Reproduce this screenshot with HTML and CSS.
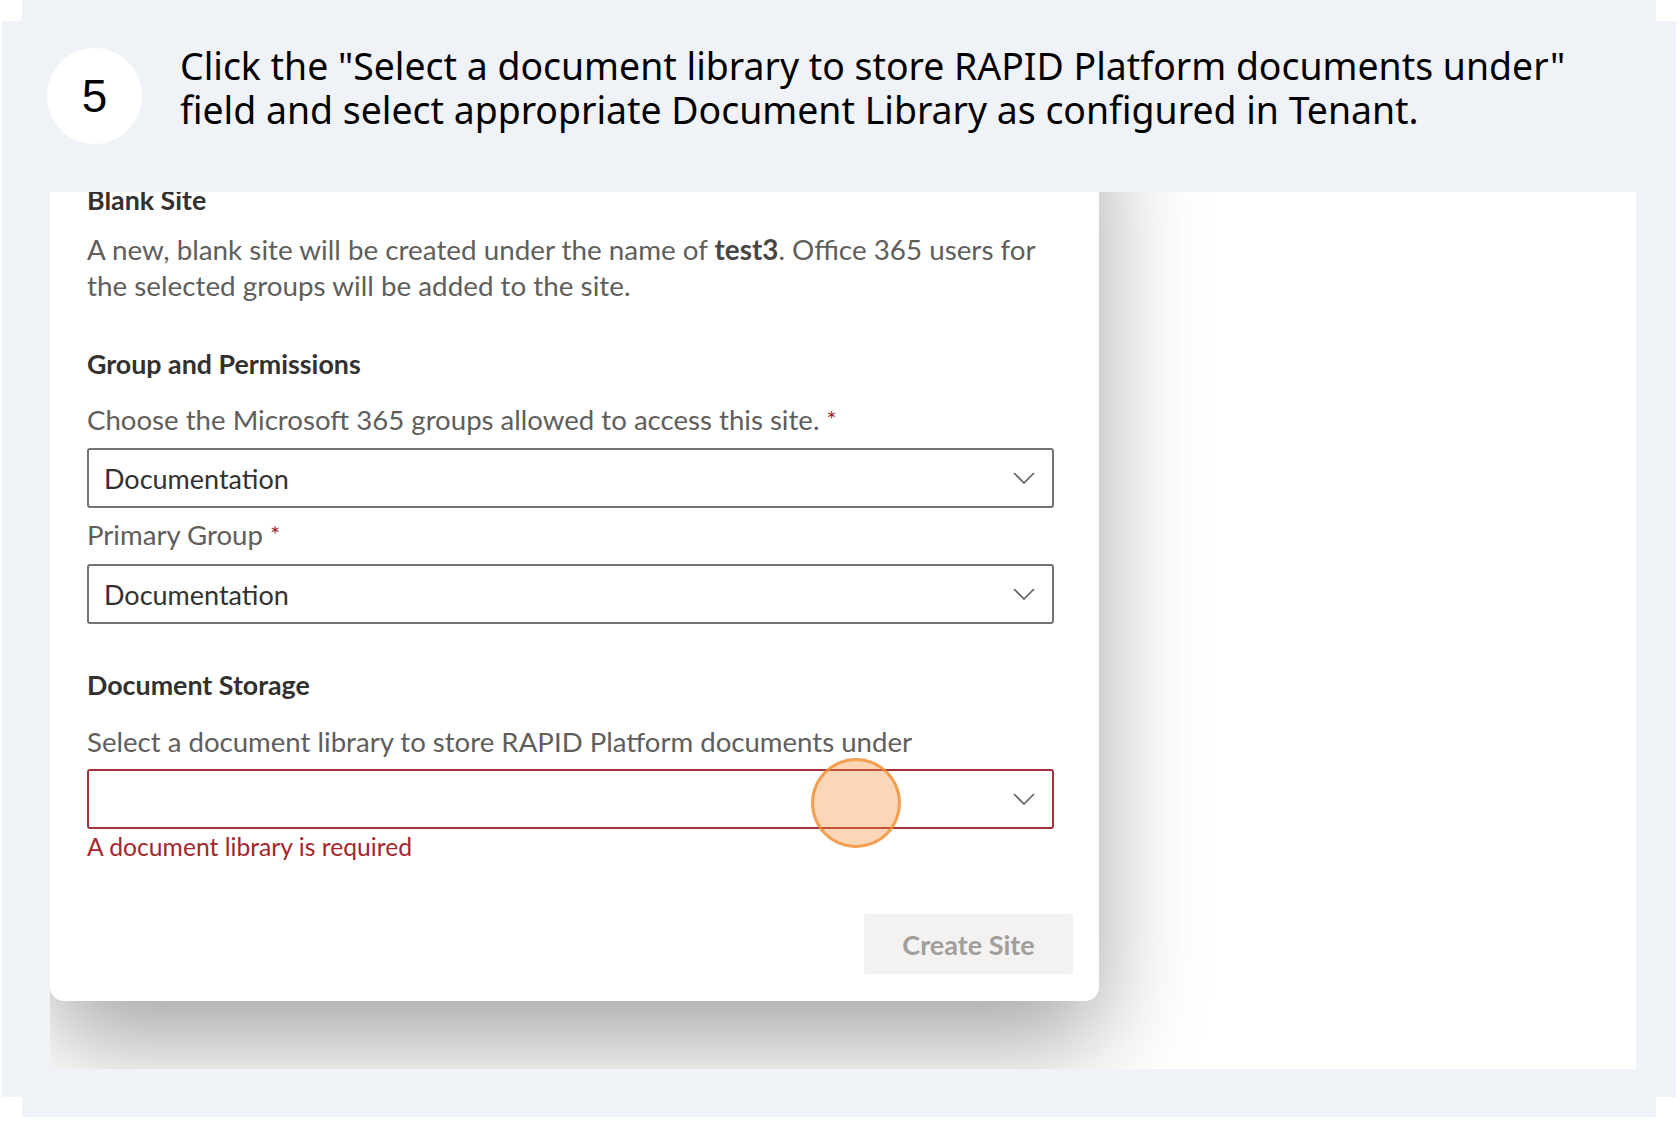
FILE: index.html
```html
<!DOCTYPE html>
<html lang="en">
<head>
<meta charset="utf-8">
<title>Step 5</title>
<link rel="stylesheet" href="styles.css">
</head>
<body>
<div class="outer">
<div class="frame">
  <header class="step">
    <div class="step-num">5</div>
    <p class="step-text">Click the "Select a document library to store RAPID Platform documents under"<br>field and select appropriate Document Library as configured in Tenant.</p>
  </header>
  <div class="shot">
    <div class="card">
      <h3 class="sec-title t-blank">Blank Site</h3>
      <p class="desc">A new, blank site will be created under the name of <b>test3</b>. Office 365 users for<br>the selected groups will be added to the site.</p>

      <h3 class="sec-title t-group">Group and Permissions</h3>
      <label class="label l-1">Choose the Microsoft 365 groups allowed to access this site.<span class="req">*</span></label>
      <div class="select s-1">
        <span class="select-value">Documentation</span>
        <svg class="chev" width="22" height="12" viewBox="0 0 22 12"><polyline points="1,1 11,11 21,1" fill="none" stroke="#5f5e5c" stroke-width="1.6"/></svg>
      </div>
      <label class="label l-2">Primary Group<span class="req">*</span></label>
      <div class="select s-2">
        <span class="select-value">Documentation</span>
        <svg class="chev" width="22" height="12" viewBox="0 0 22 12"><polyline points="1,1 11,11 21,1" fill="none" stroke="#5f5e5c" stroke-width="1.6"/></svg>
      </div>

      <h3 class="sec-title t-doc">Document Storage</h3>
      <label class="label l-3">Select a document library to store RAPID Platform documents under</label>
      <div class="select select-error s-3">
        <span class="select-value"></span>
        <svg class="chev" width="22" height="12" viewBox="0 0 22 12"><polyline points="1,1 11,11 21,1" fill="none" stroke="#5f5e5c" stroke-width="1.6"/></svg>
        <span class="click-marker"></span>
      </div>
      <p class="error">A document library is required</p>

      <div class="actions">
        <button class="btn-create" type="button">Create Site</button>
      </div>
    </div>
  </div>
</div>
</div>
</body>
</html>
```
FILE: styles.css
```css
* { box-sizing: border-box; }

body {
  margin: 0;
  background: #ffffff;
}

.outer {
  margin-left: 22px;
  width: 1634px;
  height: 1117px;
  padding-top: 21px;
  background: #eff2f7;
}

.frame {
  margin: 0 -20px;
  height: 1076px;
  background: #eff2f7;
  padding: 27px 40px 0 45px;
}

.step {
  display: flex;
  align-items: flex-start;
  gap: 38px;
  height: 96px;
}

.step-num {
  flex: none;
  width: 95px;
  height: 96px;
  border-radius: 50%;
  background: #ffffff;
  display: flex;
  align-items: center;
  justify-content: center;
  font-family: "Liberation Sans", Arial, sans-serif;
  font-size: 46px;
  color: #000;
}

.step-text {
  margin: -4px 0 0 0;
  font-family: "Noto Sans", sans-serif;
  font-size: 37.4px;
  line-height: 44px;
  color: #000;
  white-space: nowrap;
}

.shot {
  margin: 48px 0 0 3px;
  width: 1586px;
  height: 877px;
  overflow: hidden;
  background: #ffffff;
}

.card {
  width: 1049px;
  margin-top: -107px;
  padding: 100px 26px 27px 37px;
  background: #ffffff;
  border-radius: 0 0 14px 14px;
  box-shadow: 0 40px 100px rgba(0, 0, 0, 0.36);
  display: flex;
  flex-direction: column;
  font-family: Lato, "Open Sans", sans-serif;
}

.sec-title {
  margin: 0;
  font-size: 26.8px;
  line-height: 30px;
  font-weight: 700;
  color: #323130;
}

.t-group { margin-top: 45px; }
.t-doc { margin-top: 46px; }

.desc {
  margin: 17px 0 0 0;
  font-size: 27.8px;
  line-height: 36px;
  color: #605e5c;
  white-space: nowrap;
}

.desc b {
  font-weight: 700;
  color: #484644;
}

.label {
  display: block;
  font-size: 27.6px;
  line-height: 36px;
  color: #605e5c;
  white-space: nowrap;
}

.l-1 { margin-top: 22px; }
.l-2 { margin-top: 8px; }
.l-3 { margin-top: 24px; }

.req {
  color: #a4262c;
  margin-left: 7px;
  font-size: 24px;
  vertical-align: 2px;
}

.select {
  position: relative;
  width: 967px;
  height: 60px;
  border: 2px solid #737373;
  border-radius: 3px;
  display: flex;
  align-items: center;
  justify-content: space-between;
  padding: 0 17px 0 15px;
  font-size: 27px;
  color: #323130;
}

.s-1 { margin-top: 10px; }
.s-2 { margin-top: 11px; }
.s-3 { margin-top: 9px; }

.select-error {
  border-color: #a4323a;
}

.chev {
  flex: none;
  display: block;
}

.click-marker {
  position: absolute;
  left: 722px;
  top: -13px;
  width: 90px;
  height: 90px;
  border-radius: 50%;
  border: 3px solid rgba(240, 140, 45, 0.75);
  background: rgba(245, 140, 50, 0.35);
}

.error {
  margin: 3px 0 0 0;
  font-size: 24.7px;
  line-height: 30px;
  color: #a4262c;
}

.actions {
  margin-top: 52px;
  display: flex;
  justify-content: flex-end;
}

.btn-create {
  width: 209px;
  height: 60px;
  border: none;
  border-radius: 2px;
  background: #f3f2f1;
  color: #a19f9d;
  font-family: Lato, "Open Sans", sans-serif;
  font-size: 27px;
  font-weight: 700;
  padding: 0;
}
```
